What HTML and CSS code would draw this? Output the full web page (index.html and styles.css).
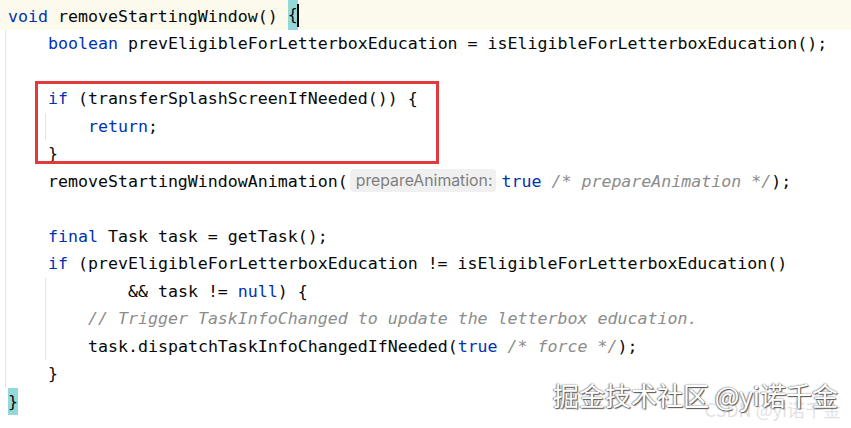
FILE: index.html
```html
<!DOCTYPE html>
<html>
<head>
<meta charset="utf-8">
<link rel="stylesheet" href="styles.css">
</head>
<body>
<div class="editor">
  <div class="line cur"><span class="kw">void</span> removeStartingWindow() <span class="match">{</span><span class="caret"></span></div>
  <div class="block outer">
    <div class="line"><span class="kw">boolean</span> prevEligibleForLetterboxEducation = isEligibleForLetterboxEducation();</div>
    <div class="line"></div>
    <div class="line"><span class="kw">if</span> (transferSplashScreenIfNeeded()) {</div>
    <div class="block inner">
      <div class="line"><span class="kw">return</span>;</div>
    </div>
    <div class="line">}</div>
    <div class="line">removeStartingWindowAnimation(<span class="hint">prepareAnimation:</span><span class="kw">true</span> <span class="cm">/* prepareAnimation */</span>);</div>
    <div class="line"></div>
    <div class="line"><span class="kw">final</span> Task task = getTask();</div>
    <div class="line"><span class="kw">if</span> (prevEligibleForLetterboxEducation != isEligibleForLetterboxEducation()</div>
    <div class="block inner">
      <div class="line">    &amp;&amp; task != <span class="kw">null</span>) {</div>
      <div class="line"><span class="cm">// Trigger TaskInfoChanged to update the letterbox education.</span></div>
      <div class="line">task.dispatchTaskInfoChangedIfNeeded(<span class="kw">true</span> <span class="cm">/* force */</span>);</div>
    </div>
    <div class="line">}</div>
  </div>
  <div class="line"><span class="match">}</span></div>
  <div class="redbox"></div>
  <div class="wm">
    <span class="wm-back">CSDN @yi诺千金</span>
    <span class="wm-front">掘金技术社区 @yi诺千金</span>
  </div>
</div>
</body>
</html>
```

FILE: styles.css
```css
html, body {
  margin: 0;
  padding: 0;
  background: #ffffff;
}
.editor {
  position: relative;
  width: 851px;
  height: 428px;
  overflow: hidden;
  font-family: "DejaVu Sans Mono", "Liberation Mono", monospace;
  font-size: 16.6px;
  color: #080808;
}
.line {
  height: 27.5px;
  line-height: 27.5px;
  white-space: pre;
  padding-left: 8px;
}
.block .line {
  padding-left: 0;
}
.line.cur {
  height: 30px;
  padding-top: 2.5px;
  box-sizing: border-box;
  background: #fcfaed;
}
.block.outer {
  margin-left: 5px;
  border-left: 1px solid #e4e4e4;
  padding-left: 42px;
}
.block.inner {
  margin-left: -3px;
  border-left: 1px solid #e4e4e4;
  padding-left: 42px;
}
.kw { color: #0033b3; }
.cm { color: #8c8c8c; font-style: italic; }
.match {
  background: #93d9d9;
  display: inline-block;
  height: 27px;
  vertical-align: top;
}
.cur .match { margin-top: -2.5px; height: 29.5px; line-height: 30px; }
.caret {
  display: inline-block;
  width: 2px;
  height: 23px;
  background: #000;
  vertical-align: top;
  margin-top: 1px;
  margin-left: -1px;
}
.hint {
  display: inline-block;
  font-family: "Inter", "Open Sans", sans-serif;
  font-style: normal;
  font-size: 15.8px;
  color: #7f7f7f;
  background: #f0f0f0;
  border-radius: 4px;
  padding: 0 4px 0 6px;
  margin: 0 5px 0 2px;
  line-height: 23px;
  height: 23px;
  vertical-align: 1px;
}
.redbox {
  position: absolute;
  left: 35px;
  top: 81px;
  width: 398px;
  height: 77px;
  border: 3px solid #e0393e;
}
.wm {
  position: absolute;
  right: 10px;
  top: 376px;
  width: 300px;
  height: 50px;
  font-family: "Noto Sans CJK SC", sans-serif;
}
.wm-back {
  position: absolute;
  right: 0;
  top: 20px;
  font-size: 18px;
  color: rgba(150, 150, 150, 0.3);
  white-space: nowrap;
}
.wm-front {
  position: absolute;
  right: 3px;
  top: 0;
  font-size: 26px;
  color: #ffffff;
  white-space: nowrap;
  text-shadow: 1px 1px 1px #555, -1px 0 1px #999, 0 0 2px #777;
}
```
